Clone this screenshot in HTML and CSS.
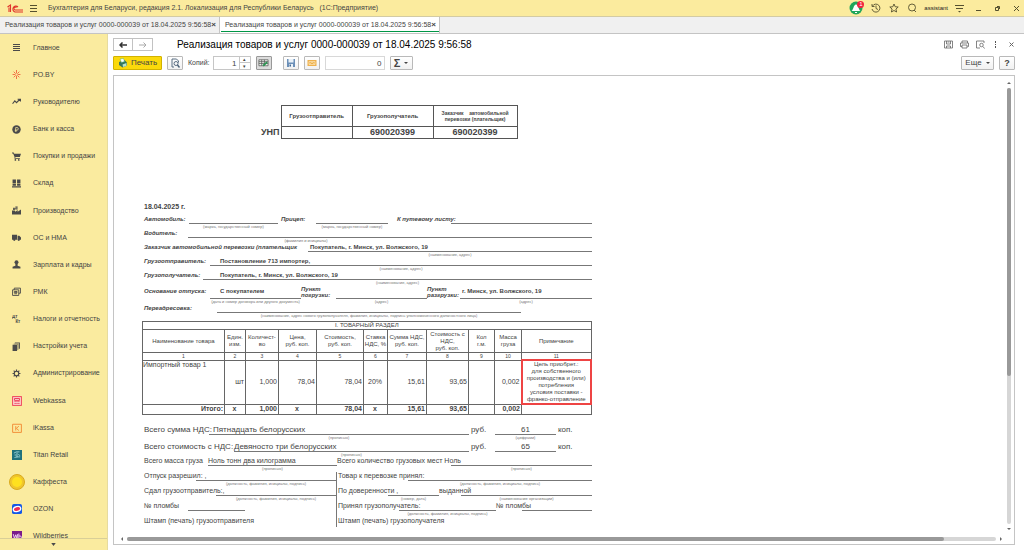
FILE: index.html
```html
<!DOCTYPE html>
<html lang="ru">
<head>
  <meta charset="UTF-8">
  <meta name="viewport" content="width=device-width, initial-scale=1.0">
  <title>Реализация товаров и услуг</title>
  <link rel="stylesheet" href="styles.css">
</head>
<body>
  <header class="topbar">
    <svg class="logo" viewBox="0 0 32 18" fill="none" stroke="#e0342b" stroke-width="2.200">
      <path d="M1 6l6-4v14M4 7v9"/>
      <path d="M22 6a6 6 0 1 0-6 10h16"/>
      <path d="M19 7a3 3 0 1 0-3 5h16"/>
    </svg>
    <button class="icon-btn" aria-label="Меню">
      <svg width="9" height="9" viewBox="0 0 9 9" stroke="#55502f"><path d="M1 1.500h7M1 4.500h7M1 7.500h7"/></svg>
    </button>
    <span class="app-name">Бухгалтерия для Беларуси, редакция 2.1. Локализация для Республики Беларусь &nbsp; (1С:Предприятие)</span>
    <div class="top-tools">
      <button class="icon-btn bell" aria-label="Уведомления">
        <svg width="14" height="14" viewBox="0 0 14 14"><circle cx="7" cy="7" r="6.500" fill="#21a65a"/><path d="M2.500 10c2-1 2-6.500 4.500-6.500S9.500 9 11.500 10zM6 11h2v1H6z" fill="#fff"/></svg>
        <span class="badge">1</span>
      </button>
      <button class="icon-btn" aria-label="История">
        <svg width="10" height="10" viewBox="0 0 20 20" fill="none" stroke="#55502f" stroke-width="1.800"><path d="M3 6a8 8 0 1 1-1 6M2 2v5h5M10 5v6l4 2"/></svg>
      </button>
      <button class="icon-btn" aria-label="Избранное">
        <svg width="10" height="10" viewBox="0 0 20 20" fill="none" stroke="#55502f" stroke-width="1.800"><path d="M10 2l2.400 5.500 6 .5-4.600 4 1.400 6L10 15l-5.200 3 1.400-6-4.600-4 6-.5z"/></svg>
      </button>
      <button class="icon-btn" aria-label="Поиск">
        <svg width="10" height="10" viewBox="0 0 20 20" fill="none" stroke="#55502f" stroke-width="1.800"><circle cx="10" cy="9" r="7"/><path d="M14 14l4 4"/></svg>
      </button>
      <span class="user">assistant</span>
      <button class="icon-btn" aria-label="Настройки">
        <svg width="9" height="9" viewBox="0 0 9 9" stroke="#55502f" fill="#55502f"><path d="M0 1.500h9M1 4.500h7"/><path d="M3 7h3L4.500 8.500z" stroke="none"/></svg>
      </button>
      <button class="icon-btn win" aria-label="Свернуть">
        <svg width="7" height="7" viewBox="0 0 7 7" stroke="#55502f"><path d="M1 5.500h5"/></svg>
      </button>
      <button class="icon-btn win" aria-label="Развернуть">
        <svg width="7" height="7" viewBox="0 0 7 7" stroke="#55502f" fill="none"><path d="M1.500 2.500h3v3h-3zM3 1.500h2.500V4"/></svg>
      </button>
      <button class="icon-btn win" aria-label="Закрыть">
        <svg width="7" height="7" viewBox="0 0 7 7" stroke="#55502f"><path d="M1 1l5 5M6 1L1 6"/></svg>
      </button>
    </div>
  </header>

  <nav class="tabs">
    <a href="#" class="tab">Реализация товаров и услуг 0000-000039 от 18.04.2025 9:56:58 <b>×</b></a>
    <a href="#" class="tab active">Реализация товаров и услуг 0000-000039 от 18.04.2025 9:56:58 <b>×</b></a>
  </nav>

  <div class="workspace">
    <aside class="sidebar">
      <ul class="menu">
        <li><a href="#"><svg viewBox="0 0 9 9" stroke="#4a4a4a"><path d="M1 1.500h7M1 3.500h7M1 5.500h7M1 7.500h7"/></svg>Главное</a></li>
        <li><a href="#"><svg viewBox="0 0 16 16" stroke="#ee5a36" stroke-width="1.500"><path d="M8 0v6M8 10v6M1 8h5M10 8h5M3 3l3.500 3.500M13 3L9.500 6.500M3 13l3.500-3.500M13 13L9.500 9.500"/></svg>PO.BY</a></li>
        <li><a href="#"><svg viewBox="0 0 16 16" fill="none" stroke="#4a4a4a" stroke-width="2"><path d="M1 12l4-5 3 3 6-6M10 4h5v4"/></svg>Руководителю</a></li>
        <li><a href="#"><svg viewBox="0 0 16 16"><circle cx="8" cy="8" r="7.500" fill="#4a4a4a"/><path d="M6.500 12V4.500H9a2 2 0 0 1 0 4.500H5M5 10.500h4" fill="none" stroke="#faeb9f" stroke-width="1.300"/></svg>Банк и касса</a></li>
        <li><a href="#"><svg viewBox="0 0 16 16" fill="#4a4a4a"><path d="M0 1h3l1 2h12l-2 6H6v1.500h8V12H4.500V9L2 2.500H0z"/><circle cx="6" cy="14" r="1.500"/><circle cx="12" cy="14" r="1.500"/></svg>Покупки и продажи</a></li>
        <li><a href="#"><svg viewBox="0 0 16 16" fill="#4a4a4a"><path d="M1 1h6v6H1zM9 1h6v6H9zM1 8h6v4H1zM9 8h6v4H9zM0 13h16v2H0z"/></svg>Склад</a></li>
        <li><a href="#"><svg viewBox="0 0 16 16" fill="#4a4a4a"><path d="M0 15V8h5l1 2 4-3v3l6-4v9zM2 3h3v4H2zM6 1h4v2H6zM5 4h5v2H6z"/></svg>Производство</a></li>
        <li><a href="#"><svg viewBox="0 0 16 16" fill="#4a4a4a"><path d="M0 3h9v9H0zM10 5h3l3 3v4h-6z"/><circle cx="4" cy="12" r="2"/><circle cx="12" cy="12" r="2"/></svg>ОС и НМА</a></li>
        <li><a href="#"><svg viewBox="0 0 16 16" fill="#4a4a4a"><circle cx="8" cy="4" r="3.500"/><path d="M6 7h4v3l5 2v3H1v-3l5-2z"/></svg>Зарплата и кадры</a></li>
        <li><a href="#"><svg viewBox="0 0 16 16" fill="none" stroke="#4a4a4a" stroke-width="1.600"><path d="M1 5h11v10H1zM4 5V2h11v9h-3M4 8h5v2H4zM4 12h5"/></svg>РМК</a></li>
        <li><a href="#"><svg viewBox="0 0 16 16" fill="#4a4a4a" font-family="Liberation Sans" font-weight="bold" font-size="8"><text x="0" y="6">Дт</text><text x="6" y="15">Кт</text></svg>Налоги и отчетность</a></li>
        <li><a href="#"><svg viewBox="0 0 16 16" fill="#4a4a4a"><path d="M1 5h8v11H1zM3 3h8v11h-1V4H3zM5 1h9v11h-2V2H5z"/></svg>Настройки учета</a></li>
        <li><a href="#"><svg viewBox="0 0 16 16" fill="none" stroke="#4a4a4a"><circle cx="8" cy="8" r="4" stroke-width="2"/><path stroke-width="2" d="M8 1v3M8 12v3M1 8h3M12 8h3M3 3l2 2M11 11l2 2M13 3l-2 2M5 11l-2 2"/></svg>Администрирование</a></li>
        <li><a href="#"><svg viewBox="0 0 16 16" fill="none" stroke="#ee3a55" stroke-width="1.500"><rect x="1" y="1" width="14" height="14" fill="#fbd5d0"/><path d="M4 4h8v3H4zM4 9h2M7 9h2M10 9h2M4 12h2M7 12h2M10 12h2"/></svg>Webkassa</a></li>
        <li><a href="#"><svg viewBox="0 0 16 16" fill="none" stroke="#f28a33" stroke-width="1.500"><path d="M1 2h14v13H1zM6 5v7M11 5L7 8.500l4 3.500"/></svg>iKassa</a></li>
        <li><a href="#"><svg viewBox="0 0 16 16"><path fill="#20717c" d="M0 0h16v16H0z"/><path d="M3 5l4-2h5M8 4v8M4 8h3M10 7l3 2M4 12l4-1h5" stroke="#a8dce0" stroke-width="1.300" fill="none"/></svg>Titan Retail</a></li>
        <li><a href="#"><svg class="big" viewBox="0 0 16 16"><circle cx="8" cy="8" r="7.500" fill="#f0c62c" stroke="#d9a91c"/><circle cx="8" cy="8" r="5" fill="#ffe11f"/></svg>Каффеста</a></li>
        <li><a href="#"><svg viewBox="0 0 16 16"><rect width="16" height="16" rx="3" fill="#1559e6"/><ellipse cx="8" cy="8" rx="7" ry="5" fill="#fff" transform="rotate(-15 8 8)"/><ellipse cx="8" cy="8" rx="5" ry="3" fill="#ee2b55" transform="rotate(-15 8 8)"/></svg>OZON</a></li>
        <li><a href="#"><svg viewBox="0 0 16 16"><path fill="#7a1a8b" d="M0 0h16v16H0z"/><path d="M2 5l2 7 2-6 2 6 1-7M11 4v8h2a2 2 0 0 0 0-4h-2" stroke="#f3d4f5" stroke-width="1.500" fill="none"/></svg>Wildberries</a></li>
      </ul>
      <button class="menu-more" aria-label="Ещё разделы"><svg width="5" height="3" viewBox="0 0 6 4"><path d="M0 0h6L3 4z" fill="#4a4a4a"/></svg></button>
    </aside>

    <main class="content">
      <div class="title-row">
        <div class="history">
          <button aria-label="Назад"><svg width="8" height="6" viewBox="0 0 8 6" fill="none" stroke="#333" stroke-width="1.500"><path d="M8 3H1M3.500 .5L1 3l2.500 2.500"/></svg></button>
          <button aria-label="Вперед"><svg width="8" height="6" viewBox="0 0 8 6" fill="none" stroke="#aaa"><path d="M0 3h7M4.500 .5L7 3 4.500 5.500"/></svg></button>
        </div>
        <h1>Реализация товаров и услуг 0000-000039 от 18.04.2025 9:56:58</h1>
        <div class="title-tools">
          <button class="icon-btn" aria-label="Сохранить"><svg width="9" height="9" viewBox="0 0 18 18" fill="none" stroke="#666" stroke-width="1.600"><path d="M1 2h16v14H1zM5 2v6h8V2M7 4h4M5 16v-4h8v4"/></svg></button>
          <button class="icon-btn" aria-label="Печать"><svg width="9" height="9" viewBox="0 0 18 18" fill="none" stroke="#666" stroke-width="1.600"><path d="M4 6V2h11v4M4 13H1V6h16v7h-2M4 10h10v6H4z"/></svg></button>
          <button class="icon-btn" aria-label="Просмотр"><svg width="9" height="9" viewBox="0 0 18 18" fill="none" stroke="#666" stroke-width="1.600"><path d="M8 16H1V2h15v4"/><circle cx="11" cy="10" r="3.500"/><path d="M14 13l3 4"/></svg></button>
          <button class="icon-btn" aria-label="Действия"><svg width="9" height="9" viewBox="0 0 9 9" fill="#555"><path d="M3 1h1v2H3zM3 4h1v1H3zM3 6h1v2H3z"/></svg></button>
          <button class="icon-btn" aria-label="Закрыть"><svg width="7" height="7" viewBox="0 0 7 7" stroke="#666"><path d="M1.500 1.500l4 4M5.500 1.500l-4 4"/></svg></button>
        </div>
      </div>

      <div class="toolbar">
        <button class="btn print">
          <svg width="10" height="10" viewBox="0 0 20 20"><path d="M2 8l11-4 5 5v6l-9 4-7-5z" fill="#37775c"/><path d="M4 2l7-1 2 6-6 2z" fill="#fff" stroke="#4a7"/><path d="M9 13l8-3v6l-7 2z" fill="#b9e4cd"/></svg>Печать
        </button>
        <button class="btn square" aria-label="Предпросмотр"><svg width="10" height="10" viewBox="0 0 20 20" fill="none" stroke="#4a6076" stroke-width="1.800"><path d="M8 18H4V2h9l4 4v3"/><circle cx="12" cy="11" r="4"/><path d="M15 14l4 5" stroke-width="3"/></svg></button>
        <label for="copies">Копий:</label>
        <div class="spinner">
          <input id="copies" type="text" value="1">
          <button aria-label="Больше">▴</button>
          <button aria-label="Меньше">▾</button>
        </div>
        <button class="btn square pressed" aria-label="Редактирование"><svg width="11" height="10" viewBox="0 0 24 20" fill="none" stroke="#555" stroke-width="1.600"><path fill="#eef5ee" d="M2 3h20v13H2zM2 7h20M2 11h20M8 3v13M14 3v13"/><path d="M11 16L20 8" stroke="#2b9552" stroke-width="4"/></svg></button>
        <button class="btn square save" aria-label="Сохранить"><svg width="10" height="10" viewBox="0 0 20 20"><path d="M2 2h16v16H2z" fill="#6b8fb8"/><path d="M5 2h10v7H5zM6 12h8v6H6z" fill="#e9f1f8"/><path d="M7 13h3v4H7z" fill="#46698f"/></svg></button>
        <button class="btn square" aria-label="Отправить"><svg width="10" height="10" viewBox="0 0 20 20"><path d="M1 4h18v12H1z" fill="#eeb14d"/><path d="M4 7h12v6H4zM4 13l5-4h2l5 4" fill="none" stroke="#fbe3b4" stroke-width="1.500"/></svg></button>
        <input class="sum" type="text" value="0" aria-label="Сумма">
        <button class="btn sigma"><b>Σ</b><i class="caret"></i></button>
        <button class="btn more">Еще<i class="caret"></i></button>
        <button class="btn square help"><b>?</b></button>
      </div>

      <div class="viewer">
        <div class="canvas">
          <article class="sheet">
            <div class="unp">
              <b class="unp-label">УНП</b>
              <table>
                <tr><th class="from">Грузоотправитель</th><th class="to">Грузополучатель</th><th class="small">Заказчик &nbsp;&nbsp; автомобильной перевозки (плательщик)</th></tr>
                <tr><td></td><td>690020399</td><td>690020399</td></tr>
              </table>
            </div>

            <section class="head-fields">
              <b class="date">18.04.2025 г.</b>
              <div class="row r-auto">
                <em>Автомобиль:</em>
                <div class="field"><b></b><small>(марка, государственный номер)</small></div>
                <em>Прицеп:</em>
                <div class="field"><b></b><small>(марка, государственный номер)</small></div>
                <em class="minor">К путевому листу:</em>
                <div class="field"><b></b></div>
              </div>
              <div class="row r-driver">
                <em>Водитель:</em>
                <div class="field"><b></b><small>(фамилия и инициалы)</small></div>
              </div>
              <div class="row r-customer">
                <em>Заказчик автомобильной перевозки (плательщик</em>
                <div class="field"><b>Покупатель, г. Минск, ул. Волжского, 19</b><small>(наименование, адрес)</small></div>
              </div>
              <div class="row r-sender">
                <em>Грузоотправитель:</em>
                <div class="field"><b>Постановление 713 импортер,</b><small>(наименование, адрес)</small></div>
              </div>
              <div class="row r-receiver">
                <em>Грузополучатель:</em>
                <div class="field"><b>Покупатель, г. Минск, ул. Волжского, 19</b><small>(наименование, адрес)</small></div>
              </div>
              <div class="row tall r-basis">
                <em>Основание отпуска:</em>
                <div class="field"><b>С покупателем</b><small>(дата и номер договора или другого документа)</small></div>
                <em class="minor">Пункт<br>погрузки:</em>
                <div class="field"><b></b><small>(адрес)</small></div>
                <em class="minor">Пункт<br>разгрузки:</em>
                <div class="field"><b>г. Минск, ул. Волжского, 19</b><small>(адрес)</small></div>
              </div>
              <div class="row r-redirect">
                <em>Переадресовка:</em>
                <div class="field"><b></b><small>(наименование, адрес нового грузополучателя, фамилия, инициалы, подпись уполномоченного должностного лица)</small></div>
              </div>
            </section>

            <table class="goods">
              <colgroup>
                <col class="c-name"><col class="c-unit"><col class="c-qty"><col class="c-price"><col class="c-cost"><col class="c-rate"><col class="c-vat"><col class="c-total"><col class="c-places"><col class="c-mass"><col class="c-note">
              </colgroup>
              <tr class="caption"><td colspan="11">I. ТОВАРНЫЙ РАЗДЕЛ</td></tr>
              <tr class="heads">
                <th>Наименование товара</th><th>Един.<br>изм.</th><th>Количест-<br>во</th><th>Цена,<br>руб. коп.</th><th>Стоимость,<br>руб. коп.</th><th>Ставка<br>НДС, %</th><th>Сумма НДС,<br>руб. коп.</th><th>Стоимость с<br>НДС,<br>руб. коп.</th><th>Кол<br>г.м.</th><th>Масса<br>груза</th><th>Примечание</th>
              </tr>
              <tr class="nums"><td>1</td><td>2</td><td>3</td><td>4</td><td>5</td><td>6</td><td>7</td><td>8</td><td>9</td><td>10</td><td>11</td></tr>
              <tr class="item">
                <td class="name">Импортный товар 1</td><td>шт</td><td>1,000</td><td>78,04</td><td>78,04</td><td class="mid">20%</td><td>15,61</td><td>93,65</td><td></td><td>0,002</td>
                <td class="note">Цель приобрет.:<br>для собственного<br>производства и (или)<br>потребления<br>условия поставки -<br>франко-отправление</td>
              </tr>
              <tr class="total"><td>Итого:</td><td class="mid">x</td><td>1,000</td><td class="mid">x</td><td>78,04</td><td class="mid">x</td><td>15,61</td><td>93,65</td><td></td><td>0,002</td><td></td></tr>
            </table>

            <section class="totals">
              <div class="row big r-sum">
                <span>Всего сумма НДС:</span>
                <div class="field"><span>Пятнадцать белорусских</span><small>(прописью)</small></div>
                <span>руб.</span>
                <div class="field mid"><span>61</span><small>(цифрами)</small></div>
                <span>коп.</span>
              </div>
              <div class="row big r-cost">
                <span>Всего стоимость с НДС:</span>
                <div class="field"><span>Девяносто три белорусских</span><small>(прописью)</small></div>
                <span>руб.</span>
                <div class="field mid"><span>65</span></div>
                <span>коп.</span>
              </div>
              <div class="row r-mass">
                <span>Всего масса груза</span>
                <div class="field"><span>Ноль тонн два килограмма</span><small>(прописью)</small></div>
                <span>Всего количество грузовых мест Ноль</span>
                <div class="field"><span></span><small>(прописью)</small></div>
              </div>
            </section>

            <section class="signs">
              <div class="side">
                <div class="row r-allow">
                  <span>Отпуск разрешил: ,</span>
                  <div class="field"><span></span><small>(должность, фамилия, инициалы, подпись)</small></div>
                </div>
                <div class="row r-gave">
                  <span>Сдал грузоотправитель:,</span>
                  <div class="field"><span></span><small>(должность, фамилия, инициалы, подпись)</small></div>
                </div>
                <div class="row r-seal">
                  <span>№ пломбы</span>
                  <div class="field"><span></span></div>
                </div>
                <div class="row"><span>Штамп (печать) грузоотправителя</span></div>
              </div>
              <div class="side right">
                <div class="row r-accept">
                  <span>Товар к перевозке принял:</span>
                  <div class="field"><span></span><small>(должность, фамилия, инициалы, подпись)</small></div>
                </div>
                <div class="row r-proxy">
                  <span>По доверенности ,</span>
                  <div class="field"><span></span><small>(номер, дата)</small></div>
                  <span>выданной</span>
                  <div class="field"><span></span><small>(наименование организации)</small></div>
                </div>
                <div class="row r-got">
                  <span>Принял грузополучатель:</span>
                  <div class="field"><span></span><small>(должность, фамилия, инициалы, подпись)</small></div>
                  <span>№ пломбы</span>
                  <div class="field"><span></span></div>
                </div>
                <div class="row"><span>Штамп (печать) грузополучателя</span></div>
              </div>
            </section>
          </article>
        </div>
        <div class="vbar"><i class="arrow up"></i><div class="track"><div class="thumb"></div></div><i class="arrow down"></i></div>
        <div class="hbar"><i class="arrow left"></i><div class="track"><div class="thumb"></div></div><i class="arrow next"></i></div>
      </div>
    </main>
  </div>
</body>
</html>
```

FILE: styles.css
```css
* {
  box-sizing: border-box;
}
body {
  margin: 0;
  height: 100vh;
  display: flex;
  flex-direction: column;
  overflow: hidden;
  font: 7px/8px "Liberation Sans", Arial, sans-serif;
  color: #444;
  background: #fff;
}
a {
  color: inherit;
  text-decoration: none;
}
button, input {
  font: inherit;
  color: inherit;
  margin: 0;
  padding: 0;
}
button {
  display: flex;
  align-items: center;
  justify-content: center;
}
svg {
  display: block;
  flex: none;
}
table {
  border-collapse: collapse;
  table-layout: fixed;
}
th, td {
  padding: 0;
}

/* top bar */
.topbar {
  display: flex;
  align-items: center;
  height: 17px;
  padding: 0 4px 0 7px;
  background: #fbeb9e;
  border-bottom: 1px solid #d3cba4;
}
.logo {
  width: 16px;
  height: 9px;
}
.icon-btn {
  background: none;
  border: 0;
}
.logo + .icon-btn {
  margin: 0 10px 0 6px;
}
.top-tools {
  display: flex;
  align-items: center;
  gap: 8px;
  margin-left: auto;
}
.bell {
  position: relative;
}
.badge {
  position: absolute;
  top: 0;
  right: -1px;
  width: 7px;
  height: 7px;
  border-radius: 50%;
  background: #f2233f;
  color: #fff;
  font-size: 6px;
  line-height: 7px;
}
.user {
  font-size: 6px;
  color: #222;
  margin: 0 -1px;
}
.win {
  margin-left: 3px;
}
.win + .win {
  margin-left: 4px;
}

/* tabs */
.tabs {
  display: flex;
  height: 17px;
  background: #f0f0f0;
  border-bottom: 1px solid #c4c4c4;
}
.tab {
  display: flex;
  justify-content: space-between;
  width: 220px;
  padding: 4px 3px 0 5px;
  border-right: 1px solid #c4c4c4;
  white-space: nowrap;
}
.tab.active {
  background: #fff;
  box-shadow: inset 1px 0 #fff, inset 0 -1px #fff, inset 0 -2px #009646;
}
.tab b {
  font-size: 8px;
}

/* sections panel */
.workspace {
  flex: 1;
  display: flex;
  min-height: 0;
}
.sidebar {
  position: relative;
  width: 108px;
  background: #faeb9f;
  border-right: 1px solid #e6dba0;
}
.menu {
  display: flex;
  flex-direction: column;
  height: 100%;
  margin: 0;
  padding: 0;
  list-style: none;
}
.menu li {
  flex: 1;
  min-height: 0;
  display: flex;
  align-items: center;
}
.menu a {
  display: grid;
  grid-template-columns: 33px 1fr;
  align-items: center;
  white-space: nowrap;
}
.menu svg {
  width: 10px;
  height: 10px;
  margin-left: 12px;
}
.menu li:nth-child(-n+13) svg {
  width: 9px;
  height: 9px;
}
.menu svg.big {
  width: 16px;
  height: 16px;
  margin-left: 9px;
}
.menu-more {
  position: absolute;
  left: 0;
  right: 0;
  bottom: 0;
  height: 12px;
  background: #faeb9f;
  border: 0;
  border-top: 1px solid #d9cf98;
}

/* form header */
.content {
  flex: 1;
  display: flex;
  flex-direction: column;
  min-width: 0;
  padding: 4px 9px 5px 5px;
}
.title-row {
  display: flex;
  align-items: center;
  height: 13px;
}
.history {
  display: flex;
}
.history button {
  width: 20px;
  height: 13px;
  background: #fff;
  border: 1px solid #c2c2c2;
}
.history button + button {
  border-left: 0;
}
h1 {
  margin: 0 0 0 24px;
  font-size: 10px;
  line-height: 13px;
  font-weight: normal;
  color: #000;
}
.title-tools {
  display: flex;
  align-items: center;
  gap: 7px;
  margin-left: auto;
}
.toolbar {
  display: flex;
  align-items: center;
  gap: 5px;
  margin: 5px 0;
}
.btn {
  height: 14px;
  background: linear-gradient(#fff, #f1f1f1);
  border: 1px solid #b9b9b9;
  border-radius: 1px;
}
.print {
  width: 49px;
  gap: 3px;
  background: #fbd90b;
  border-color: #d2b200;
  font-size: 8px;
}
.square {
  width: 16px;
}
.pressed {
  background: #dcdcdc;
  border-color: #999;
}
.save {
  margin-left: 6px;
}
.toolbar input {
  height: 14px;
  border: 1px solid #c6c6c6;
  padding: 0 2px;
  text-align: right;
  background: #fff;
  font-size: 8px;
}
.spinner {
  display: grid;
  grid-template: 7px 7px / 27px 11px;
  margin-left: -2px;
}
.spinner input {
  grid-row: span 2;
  width: 27px;
}
.spinner button {
  background: #fff;
  border: 1px solid #c6c6c6;
  border-left: 0;
  font-size: 5px;
  line-height: 5px;
}
.spinner button:last-child {
  border-top: 0;
}
.toolbar .sum {
  width: 60px;
  border-color: #d8d8d8;
}
.sigma {
  width: 23px;
  gap: 4px;
}
.sigma b {
  font-size: 11px;
}
.caret {
  border: 2px solid transparent;
  border-top-color: #444;
  border-bottom: 0;
}
.more {
  width: 33px;
  gap: 4px;
  margin-left: auto;
  font-size: 8px;
}
.help b {
  font-size: 9px;
}

/* print form viewer */
.viewer {
  flex: 1;
  display: grid;
  grid-template: minmax(0, 1fr) 10px / minmax(0, 1fr) 10px;
  min-height: 0;
  border: 1px solid #c4c4c4;
}
.canvas {
  overflow: hidden;
}
.vbar, .hbar {
  display: flex;
  align-items: center;
}
.vbar {
  flex-direction: column;
  padding: 4px 0 2px;
}
.hbar {
  padding-left: 5px;
}
.track {
  flex: 1;
  border-radius: 2px;
  background: #d6d6d6;
}
.thumb {
  border-radius: 2px;
  background: #999;
}
.vbar .track {
  width: 4px;
  margin: 4px 0;
}
.vbar .thumb {
  height: 66%;
}
.hbar .track {
  height: 4px;
  margin: 0 4px;
}
.hbar .thumb {
  width: 94%;
  height: 4px;
}
.arrow {
  border: 2px solid transparent;
}
.up {
  border-bottom-color: #666;
}
.down {
  border-top-color: #666;
}
.left {
  border-right-color: #666;
}
.next {
  border-left-color: #666;
}

/* printed sheet */
.sheet {
  width: 478px;
  padding: 29px 0 0 28px;
  white-space: nowrap;
}
.unp {
  display: flex;
  align-items: flex-end;
  gap: 1px;
  margin-left: 119px;
}
.unp-label {
  font-size: 9px;
  line-height: 14px;
}
.unp table {
  width: 237px;
}
.unp th, .unp td {
  border: 1px solid #555;
  text-align: center;
}
.unp th {
  height: 21px;
  font-size: 6px;
}
.unp .from {
  width: 71px;
}
.unp .to {
  width: 81px;
}
.unp .small {
  font-size: 5px;
  line-height: 6px;
  white-space: normal;
}
.unp td {
  height: 12px;
  font-size: 9px;
  line-height: 11px;
  font-weight: bold;
}
.row {
  display: grid;
  align-items: start;
  height: 14px;
}
.field > :first-child {
  display: block;
  height: 9px;
  border-bottom: 1px solid #777;
}
.field small {
  display: block;
  font-size: 4px;
  line-height: 6px;
  text-align: center;
  color: #777;
}
.head-fields {
  margin-top: 64px;
  padding-left: 2px;
}
.head-fields .row {
  font-size: 6px;
}
.head-fields em {
  font-weight: bold;
}
.date {
  display: block;
  margin-bottom: 4px;
}
.r-auto {
  grid-template-columns: 45px 92px 35px 81px 54px 1fr;
}
.r-auto .field {
  margin-right: 3px;
}
.r-auto .field:nth-child(4) {
  margin-right: 9px;
}
.r-auto .field:last-child {
  margin-right: 0;
}
.r-driver {
  grid-template-columns: 44px 1fr;
}
.r-driver small {
  width: 236px;
}
.r-customer {
  grid-template-columns: 164px 1fr;
}
.r-customer b {
  padding-left: 2px;
}
.r-sender {
  grid-template-columns: 66px 1fr;
}
.r-sender b, .r-basis .field:nth-child(2) b {
  padding-left: 10px;
}
.r-receiver {
  grid-template-columns: 59px 1fr;
}
.r-receiver b {
  padding-left: 17px;
}
.r-basis {
  grid-template-columns: 66px 91px 35px 91px 33px 1fr;
}
.r-basis .field:last-child b {
  padding-left: 2px;
}
.head-fields .minor {
  line-height: 6px;
}
.head-fields .r-auto .minor {
  line-height: 8px;
}
.tall {
  height: 19px;
  padding-top: 1px;
}
.tall > em:first-child, .tall .field b {
  line-height: 10px;
}
.tall .field b {
  height: 13px;
}
.r-redirect {
  grid-template-columns: 73px 304px;
}

/* goods table */
.goods {
  width: 450px;
  margin-top: 3px;
}
.goods th, .goods td {
  border: 1px solid #666;
  font-weight: normal;
  text-align: center;
}
.c-name { width: 82px; }
.c-unit { width: 21px; }
.c-qty { width: 33px; }
.c-price { width: 38px; }
.c-cost { width: 47px; }
.c-rate { width: 24px; }
.c-vat { width: 39px; }
.c-total { width: 42px; }
.c-places { width: 26px; }
.c-mass { width: 27px; }
.goods .caption td {
  font-size: 6px;
  line-height: 7px;
}
.goods .heads th {
  height: 23px;
  font-size: 6px;
  line-height: 7px;
}
.goods .nums td {
  font-size: 5px;
  line-height: 6px;
}
.goods .item td, .goods .total td {
  text-align: right;
  padding-right: 1px;
}
.goods .item td {
  height: 42px;
}
.goods td.mid, .goods .item .note {
  text-align: center;
}
.goods .item .name {
  text-align: left;
  vertical-align: top;
}
.goods .item .note {
  padding: 0;
  border: 2px solid #ee4444;
  font-size: 6px;
  line-height: 7px;
}
.goods .total td {
  height: 10px;
  font-weight: bold;
}

/* totals and signatures */
.totals {
  margin-top: 9px;
  padding-left: 2px;
}
.totals .row {
  height: 15px;
}
.totals .big {
  font-size: 8px;
  line-height: 11px;
  height: 17px;
}
.totals .r-cost {
  height: 16px;
}
.big .field > :first-child {
  height: 11px;
}
.field.mid {
  text-align: center;
}
.r-sum {
  grid-template-columns: 65px 260px 26px 61px 1fr;
}
.r-cost {
  grid-template-columns: 90px 235px 26px 61px 1fr;
}
.big > span:nth-child(3), .big > span:nth-child(5) {
  padding-left: 2px;
}
.r-sum .field:nth-child(2) > span {
  padding-left: 4px;
}
.r-mass {
  grid-template-columns: 64px 129px 114px 1fr;
}
.signs {
  display: grid;
  grid-template-columns: 194px 1fr;
}
.side .row {
  height: 15px;
}
.side .row:last-child {
  height: 10px;
}
.side {
  padding-left: 2px;
}
.side.right {
  padding-left: 1px;
  border-left: 1px solid #777;
}
.r-allow {
  grid-template-columns: 52px 1fr;
}
.r-gave {
  grid-template-columns: 72px 1fr;
}
.r-seal {
  grid-template-columns: 44px 57px;
}
.r-accept {
  grid-template-columns: 70px 1fr;
}
.r-proxy {
  grid-template-columns: 50px 51px 22px 1fr;
}
.r-got {
  grid-template-columns: 61px 97px 26px 1fr;
}
```
